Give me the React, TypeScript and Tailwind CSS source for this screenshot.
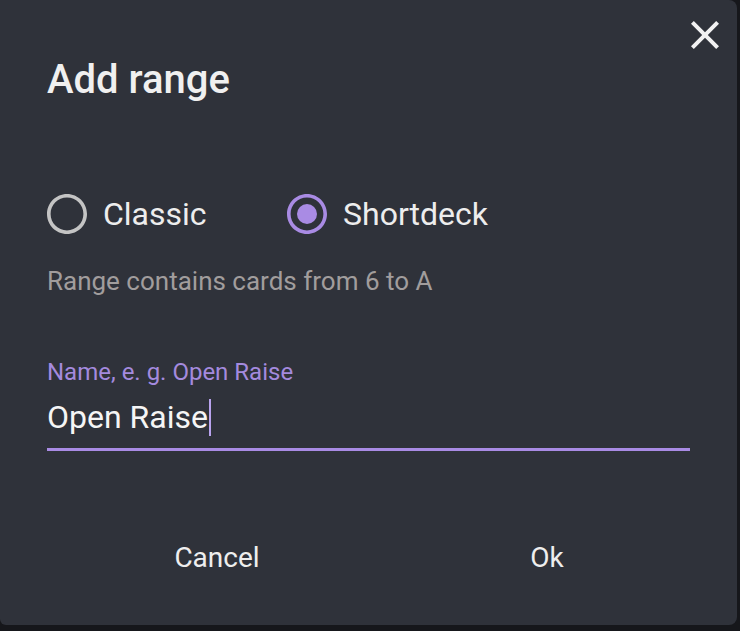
import { useState } from 'react';

const PURPLE = '#a98be4';

function RadioIcon({ checked }: { checked: boolean }) {
  return (
    <svg width="48" height="48" viewBox="0 0 24 24" className="shrink-0">
      <path
        fill={checked ? PURPLE : '#c4c4c4'}
        fillRule="evenodd"
        d="M12 2C6.48 2 2 6.48 2 12s4.48 10 10 10 10-4.48 10-10S17.52 2 12 2zm0 18.2c-4.53 0-8.2-3.67-8.2-8.2S7.47 3.8 12 3.8s8.2 3.67 8.2 8.2-3.67 8.2-8.2 8.2z"
      />
      {checked && <circle cx="12" cy="12" r="5" fill={PURPLE} />}
    </svg>
  );
}

export default function App() {
  const [deck, setDeck] = useState('Shortdeck');

  return (
    <div className="w-[740px] h-[631px] bg-[#16171b] font-['Roboto',sans-serif]">
      <div className="relative w-[737px] h-[625px] bg-[#2f323a] rounded-tr-lg rounded-br-lg rounded-bl-md flex flex-col">
        {/* close */}
        <button className="absolute right-[8px] top-[11px] w-[48px] h-[48px] flex items-center justify-center text-[#f2f2f2]">
          <svg width="48" height="48" viewBox="0 0 24 24">
            <path
              fill="currentColor"
              d="M19 6.41L17.59 5 12 10.59 6.41 5 5 6.41 10.59 12 5 17.59 6.41 19 12 13.41 17.59 19 19 17.59 13.41 12z"
            />
          </svg>
        </button>

        <h1 className="mt-[56px] ml-[47px] text-[40px] leading-[48px] font-medium text-[#f0f0f0]">Add range</h1>

        {/* radios */}
        <div className="mt-[86px] ml-[43px] flex items-center h-[48px]">
          {['Classic', 'Shortdeck'].map((d, i) => (
            <label
              key={d}
              onClick={() => setDeck(d)}
              className={`flex items-center cursor-pointer ${i === 0 ? 'w-[240px]' : ''}`}
            >
              <RadioIcon checked={deck === d} />
              <span className="ml-[12px] text-[32px] leading-[48px] text-[#ededed]">{d}</span>
            </label>
          ))}
        </div>

        <p className="mt-[25px] ml-[47px] text-[26px] leading-[36px] text-[#a19d9d]">
          Range contains cards from 6 to A
        </p>

        {/* text field */}
        <div className="mt-[57px] ml-[47px] w-[643px]">
          <div className="text-[24px] leading-[32px] text-[#a48ade]">Name, e. g. Open Raise</div>
          <div className="flex items-center h-[48px] mt-[5px]">
            <span className="text-[32px] leading-[48px] text-[#f5f5f5]">Open Raise</span>
            <span className="w-[2px] h-[37px] bg-[#b9a3ee] ml-[1px]" />
          </div>
          <div className="h-[3px] bg-[#a98be4] mt-[7px]" />
        </div>

        {/* actions */}
        <div className="mt-auto mb-[39px] ml-[52px] flex">
          <button className="w-[330px] h-[56px] text-[28px] text-[#eeeeee]">Cancel</button>
          <button className="w-[330px] h-[56px] text-[28px] text-[#eeeeee]">Ok</button>
        </div>
      </div>
    </div>
  );
}
